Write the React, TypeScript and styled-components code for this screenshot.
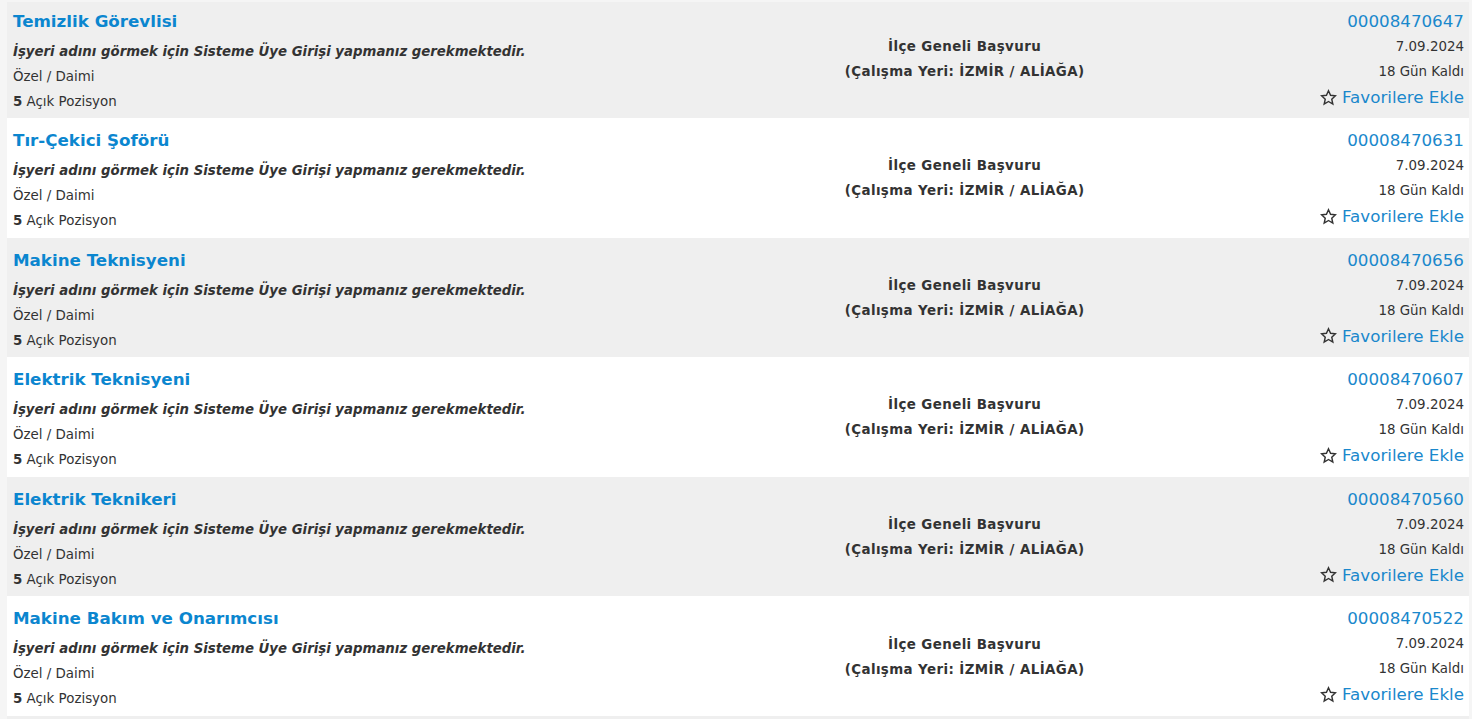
import React from 'react';
import styled, { createGlobalStyle } from 'styled-components';

const GlobalStyle = createGlobalStyle`
  html, body {
    margin: 0;
    padding: 0;
    background: #f5f5f5;
    font-family: "DejaVu Sans", Verdana, sans-serif;
    color: #333;
  }
`;

interface Job {
  title: string;
  code: string;
}

const jobs: Job[] = [
  { title: 'Temizlik Görevlisi', code: '00008470647' },
  { title: 'Tır-Çekici Şoförü', code: '00008470631' },
  { title: 'Makine Teknisyeni', code: '00008470656' },
  { title: 'Elektrik Teknisyeni', code: '00008470607' },
  { title: 'Elektrik Teknikeri', code: '00008470560' },
  { title: 'Makine Bakım ve Onarımcısı', code: '00008470522' },
];

const List = styled.div`
  padding: 2px 3px 0 7px;
  height: 719px;
  overflow: hidden;
  box-sizing: border-box;
`;

const Row = styled.div<{ $odd: boolean; $first: boolean }>`
  display: grid;
  grid-template-columns: 52% 27% 21%;
  box-sizing: border-box;
  height: ${(p) => (p.$first ? '116px' : '119.6px')};
  padding-top: ${(p) => (p.$first ? '6px' : '9px')};
  background: ${(p) => (p.$odd ? '#efefef' : '#ffffff')};
`;

// next result row, only its top edge is visible
const NextRow = styled.div`
  height: 20px;
  background: #efefef;
`;

const LeftCol = styled.div`
  display: flex;
  flex-direction: column;
  padding-left: 6px;
`;

const Title = styled.a`
  font-size: 16.7px;
  font-weight: bold;
  color: #0b86cf;
  line-height: 26px;
  text-decoration: none;
  margin-bottom: 5px;
`;

const Line = styled.div<{ $italic?: boolean; $bold?: boolean; $wide?: boolean }>`
  font-size: ${(p) => (p.$italic ? '13.3px' : '13.4px')};
  line-height: 25px;
  font-style: ${(p) => (p.$italic ? 'italic' : 'normal')};
  font-weight: ${(p) => (p.$bold ? 'bold' : 'normal')};
  letter-spacing: ${(p) => (p.$wide ? '0.4px' : 'normal')};
  color: #333;
  b {
    font-weight: bold;
  }
`;

const MiddleCol = styled.div`
  display: flex;
  flex-direction: column;
  align-items: center;
  justify-content: center;
  padding-bottom: 8px;
`;

const RightCol = styled.div`
  display: flex;
  flex-direction: column;
  align-items: flex-end;
  padding-right: 5px;
`;

const Code = styled.div`
  font-size: 16.7px;
  line-height: 26px;
  color: #1a88cc;
`;

const Fav = styled.a`
  display: flex;
  align-items: center;
  gap: 5px;
  font-size: 16.7px;
  line-height: 26px;
  color: #1a88cc;
  text-decoration: none;
  cursor: pointer;
`;

const StarIcon = () => (
  <svg width="17" height="17" viewBox="0 0 24 24" fill="none" stroke="#333" strokeWidth="2" strokeLinejoin="miter">
    <polygon points="12,2.5 14.9,8.9 21.8,9.6 16.6,14.3 18.1,21.2 12,17.6 5.9,21.2 7.4,14.3 2.2,9.6 9.1,8.9" />
  </svg>
);

export default function App() {
  return (
    <>
      <GlobalStyle />
      <List>
        {jobs.map((job, i) => (
          <Row key={job.code} $odd={i % 2 === 0} $first={i === 0}>
            <LeftCol>
              <Title>{job.title}</Title>
              <Line $italic $bold>
                İşyeri adını görmek için Sisteme Üye Girişi yapmanız gerekmektedir.
              </Line>
              <Line>Özel / Daimi</Line>
              <Line>
                <b>5</b> Açık Pozisyon
              </Line>
            </LeftCol>
            <MiddleCol>
              <Line $bold $wide>İlçe Geneli Başvuru</Line>
              <Line $bold $wide>(Çalışma Yeri: İZMİR / ALİAĞA)</Line>
            </MiddleCol>
            <RightCol>
              <Code>{job.code}</Code>
              <Line>7.09.2024</Line>
              <Line>18 Gün Kaldı</Line>
              <Fav>
                <StarIcon />
                Favorilere Ekle
              </Fav>
            </RightCol>
          </Row>
        ))}
        <NextRow />
      </List>
    </>
  );
}
